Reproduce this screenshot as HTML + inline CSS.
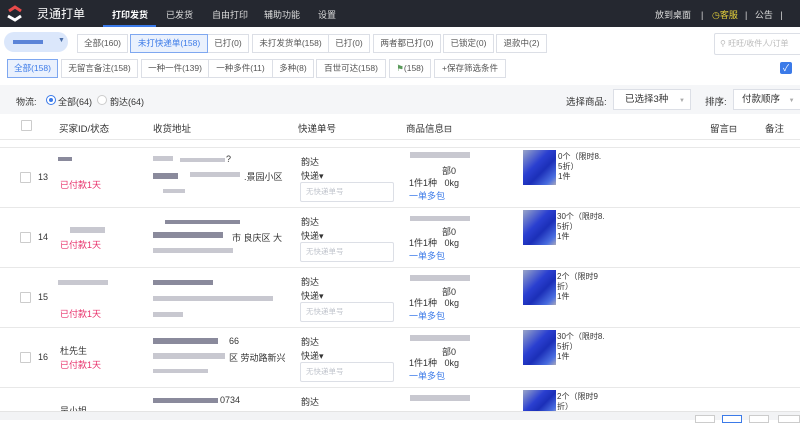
<!DOCTYPE html>
<html><head><meta charset="utf-8"><style>
*{margin:0;padding:0;box-sizing:border-box}
body{width:800px;height:420px;overflow:hidden;background:#fff;font-family:"Liberation Sans","Noto Sans CJK SC",sans-serif;font-size:9px;color:#333;position:relative}
.a{position:absolute;white-space:nowrap}
.hd{left:0;top:0;width:800px;height:27px;background:#252830}
.nav{color:#dcdcdc;font-size:9px;top:8px}
.btn{position:absolute;height:19px;border:1px solid #dcdfe6;background:#fff;font-size:8.5px;line-height:17px;text-align:center;color:#555}
.on{border-color:#7ea7f0;background:#eaf1fd;color:#3b7ae8;z-index:2}
.bl{background:#c8c8d0}
.bd{background:#8a8a9c}
.cb{position:absolute;width:11px;height:11px;border:1px solid #ccc;background:#fff;border-radius:1px}
.red{color:#e8336c;font-size:9px}
.blue{color:#3b7ae8;font-size:9px}
.inp{position:absolute;width:94px;height:20px;border:1px solid #dcdfe6;border-radius:2px;color:#c0c4cc;font-size:7.5px;line-height:18px;padding-left:5px}
.line{position:absolute;left:0;width:800px;height:1px;background:#e8e8e8}
.img{position:absolute;width:33px;height:35px;background:linear-gradient(135deg,#9aa6c8 0%,#2a3fd0 40%,#1b2fb8 60%,#4a6ee0 85%,#aab 100%)}
</style></head><body>
<div class="a hd"></div>
<svg class="a" style="left:6px;top:5px" width="18" height="18" viewBox="0 0 18 18"><path d="M3 6 L9 2 L15 6" stroke="#e84a4a" stroke-width="3" fill="none"/><path d="M2 11 L9 15 L15 11" stroke="#fff" stroke-width="3" fill="none"/></svg>
<div class="a" style="left:37px;top:5px;color:#fff;font-size:12px">灵通打单</div>
<div class="a nav" style="left:112px;color:#fff;font-weight:bold">打印发货</div>
<div class="a" style="left:103px;top:25px;width:53px;height:2px;background:#3b7ae8"></div>
<div class="a nav" style="left:166px">已发货</div>
<div class="a nav" style="left:212px">自由打印</div>
<div class="a nav" style="left:264px">辅助功能</div>
<div class="a nav" style="left:318px">设置</div>
<div class="a nav" style="left:655px">放到桌面 &nbsp; &nbsp;|</div>
<div class="a nav" style="left:712px;color:#e6d23a">◷客服</div>
<div class="a nav" style="left:745px">| &nbsp; 公告 &nbsp; |</div>

<div class="a" style="left:4px;top:32px;width:64px;height:20px;border-radius:10px;background:#dbe7fb"></div>
<div class="a" style="left:13px;top:40px;width:30px;height:4px;background:#5b84d8"></div>
<div class="a" style="left:58px;top:37px;font-size:7px;color:#4a6ea8">▼</div>
<div class="btn" style="left:77px;top:34px;width:51px">全部(160)</div>
<div class="btn on" style="left:130px;top:34px;width:78px">未打快递单(158)</div>
<div class="btn" style="left:207px;top:34px;width:42px">已打(0)</div>
<div class="btn" style="left:252px;top:34px;width:77px">未打发货单(158)</div>
<div class="btn" style="left:328px;top:34px;width:42px">已打(0)</div>
<div class="btn" style="left:373px;top:34px;width:68px">两者都已打(0)</div>
<div class="btn" style="left:443px;top:34px;width:51px">已锁定(0)</div>
<div class="btn" style="left:496px;top:34px;width:51px">退款中(2)</div>
<div class="a" style="left:714px;top:33px;width:90px;height:22px;border:1px solid #dcdfe6;border-radius:2px;color:#bbb;font-size:8px;line-height:20px;padding-left:5px">⚲ 旺旺/收件人/订单</div>

<div class="btn on" style="left:7px;top:59px;width:51px">全部(158)</div>
<div class="btn" style="left:61px;top:59px;width:77px">无留言备注(158)</div>
<div class="btn" style="left:141px;top:59px;width:68px">一种一件(139)</div>
<div class="btn" style="left:208px;top:59px;width:65px">一种多件(11)</div>
<div class="btn" style="left:272px;top:59px;width:42px">多种(8)</div>
<div class="btn" style="left:316px;top:59px;width:70px">百世可达(158)</div>
<div class="btn" style="left:389px;top:59px;width:42px"><span style="color:#5a9a5a">⚑</span>(158)</div>
<div class="btn" style="left:434px;top:59px;width:72px">+保存筛选条件</div>
<div class="a" style="left:780px;top:62px;width:12px;height:12px;background:#3b7ae8;border-radius:2px;color:#fff;font-size:9px;line-height:12px;text-align:center">✓</div>

<div class="a" style="left:0;top:85px;width:800px;height:29px;background:#f5f6f8"></div>
<div class="a" style="left:16px;top:95px">物流:</div>
<div class="a" style="left:46px;top:95px;width:10px;height:10px;border:1px solid #3b7ae8;border-radius:50%;background:#fff"></div>
<div class="a" style="left:49px;top:98px;width:4px;height:4px;border-radius:50%;background:#3b7ae8"></div>
<div class="a" style="left:58px;top:95px">全部(64)</div>
<div class="a" style="left:97px;top:95px;width:10px;height:10px;border:1px solid #ccc;border-radius:50%;background:#fff"></div>
<div class="a" style="left:110px;top:95px">韵达(64)</div>
<div class="a" style="left:566px;top:94px;font-size:9.5px">选择商品:</div>
<div class="a" style="left:613px;top:89px;width:78px;height:21px;border:1px solid #dcdfe6;background:#fff;font-size:9.5px;line-height:19px;padding-left:11px">已选择3种 <span style="color:#aaa;font-size:6px;margin-left:8px">▼</span></div>
<div class="a" style="left:705px;top:94px;font-size:9.5px">排序:</div>
<div class="a" style="left:733px;top:89px;width:70px;height:21px;border:1px solid #dcdfe6;background:#fff;font-size:9.5px;line-height:19px;padding-left:8px">付款顺序 <span style="color:#aaa;font-size:6px;margin-left:6px">▼</span></div>

<div class="cb" style="left:21px;top:120px"></div>
<div class="a" style="left:59px;top:121px;font-size:9.5px">买家ID/状态</div>
<div class="a" style="left:153px;top:121px;font-size:9.5px">收货地址</div>
<div class="a" style="left:298px;top:121px;font-size:9.5px">快递单号</div>
<div class="a" style="left:406px;top:121px;font-size:9.5px">商品信息⊟</div>
<div class="a" style="left:710px;top:121px;font-size:9.5px">留言⊟</div>
<div class="a" style="left:765px;top:121px;font-size:9.5px">备注</div>
<div class="line" style="top:139px"></div>
<div class="line" style="top:147px"></div>

<!-- row 13 -->
<div class="cb" style="left:20px;top:172px"></div>
<div class="a" style="left:38px;top:172px">13</div>
<div class="a bd" style="left:60px;top:170px;display:none"></div>
<div class="a bd" style="left:58px;top:157px;width:14px;height:4px"></div>
<div class="a red" style="left:60px;top:178px">已付款1天</div>
<div class="a bl" style="left:153px;top:156px;width:20px;height:5px"></div><div class="a bl" style="left:180px;top:158px;width:45px;height:4px"></div><div class="a" style="left:226px;top:154px">?</div>
<div class="a bd" style="left:153px;top:173px;width:25px;height:6px"></div><div class="a bl" style="left:190px;top:172px;width:50px;height:5px"></div><div class="a" style="left:244px;top:170px">.景园小区</div>
<div class="a bl" style="left:163px;top:189px;width:22px;height:4px"></div>
<div class="a" style="left:301px;top:155px">韵达</div><div class="a" style="left:301px;top:169px">快递▾</div>
<div class="inp" style="left:300px;top:182px">无快递单号</div>
<div class="a bl" style="left:410px;top:152px;width:60px;height:6px"></div>
<div class="a" style="left:442px;top:164px">部0</div>
<div class="a" style="left:409px;top:176px">1件1种 &nbsp; 0kg</div>
<div class="a blue" style="left:409px;top:189px">一单多包</div>
<div class="img" style="left:523px;top:150px"></div>
<div class="a" style="left:558px;top:152px;font-size:8px;line-height:10px">0个（限时8.<br>5折）<br>1件</div>
<div class="line" style="top:207px"></div>

<!-- row 14 -->
<div class="cb" style="left:20px;top:232px"></div>
<div class="a" style="left:38px;top:232px">14</div>
<div class="a bl" style="left:70px;top:227px;width:35px;height:6px"></div>
<div class="a red" style="left:60px;top:238px">已付款1天</div>
<div class="a bd" style="left:165px;top:220px;width:75px;height:4px"></div>
<div class="a bd" style="left:153px;top:232px;width:70px;height:6px"></div><div class="a" style="left:232px;top:231px">市 良庆区 大</div>
<div class="a bl" style="left:153px;top:248px;width:80px;height:5px"></div>
<div class="a" style="left:301px;top:215px">韵达</div><div class="a" style="left:301px;top:229px">快递▾</div>
<div class="inp" style="left:300px;top:242px">无快递单号</div>
<div class="a bl" style="left:410px;top:216px;width:60px;height:5px"></div>
<div class="a" style="left:442px;top:225px">部0</div>
<div class="a" style="left:409px;top:236px">1件1种 &nbsp; 0kg</div>
<div class="a blue" style="left:409px;top:249px">一单多包</div>
<div class="img" style="left:523px;top:210px"></div>
<div class="a" style="left:557px;top:212px;font-size:8px;line-height:10px">30个（限时8.<br>5折）<br>1件</div>
<div class="line" style="top:267px"></div>

<!-- row 15 -->
<div class="cb" style="left:20px;top:292px"></div>
<div class="a" style="left:38px;top:292px">15</div>
<div class="a bl" style="left:58px;top:280px;width:50px;height:5px"></div>
<div class="a red" style="left:60px;top:307px">已付款1天</div>
<div class="a bd" style="left:153px;top:280px;width:60px;height:5px"></div>
<div class="a bl" style="left:153px;top:296px;width:120px;height:5px"></div>
<div class="a bl" style="left:153px;top:312px;width:30px;height:5px"></div>
<div class="a" style="left:301px;top:275px">韵达</div><div class="a" style="left:301px;top:289px">快递▾</div>
<div class="inp" style="left:300px;top:302px">无快递单号</div>
<div class="a bl" style="left:410px;top:275px;width:60px;height:6px"></div>
<div class="a" style="left:442px;top:285px">部0</div>
<div class="a" style="left:409px;top:296px">1件1种 &nbsp; 0kg</div>
<div class="a blue" style="left:409px;top:309px">一单多包</div>
<div class="img" style="left:523px;top:270px"></div>
<div class="a" style="left:557px;top:272px;font-size:8px;line-height:10px">2个（限时9<br>折）<br>1件</div>
<div class="line" style="top:327px"></div>

<!-- row 16 -->
<div class="cb" style="left:20px;top:352px"></div>
<div class="a" style="left:38px;top:352px">16</div>
<div class="a" style="left:60px;top:344px">杜先生</div>
<div class="a red" style="left:60px;top:358px">已付款1天</div>
<div class="a bd" style="left:153px;top:338px;width:65px;height:6px"></div><div class="a" style="left:229px;top:336px">66</div>
<div class="a bl" style="left:153px;top:353px;width:72px;height:6px"></div><div class="a" style="left:229px;top:351px">区 劳动路新兴</div>
<div class="a bl" style="left:153px;top:369px;width:55px;height:4px"></div>
<div class="a" style="left:301px;top:335px">韵达</div><div class="a" style="left:301px;top:349px">快递▾</div>
<div class="inp" style="left:300px;top:362px">无快递单号</div>
<div class="a bl" style="left:410px;top:335px;width:60px;height:6px"></div>
<div class="a" style="left:442px;top:345px">部0</div>
<div class="a" style="left:409px;top:356px">1件1种 &nbsp; 0kg</div>
<div class="a blue" style="left:409px;top:369px">一单多包</div>
<div class="img" style="left:523px;top:330px"></div>
<div class="a" style="left:557px;top:332px;font-size:8px;line-height:10px">30个（限时8.<br>5折）<br>1件</div>
<div class="line" style="top:387px"></div>

<!-- row 17 partial -->
<div class="a" style="left:60px;top:404px">吴小姐</div>
<div class="a bd" style="left:153px;top:398px;width:65px;height:5px"></div><div class="a" style="left:220px;top:395px">0734</div>
<div class="a" style="left:301px;top:395px">韵达</div>
<div class="a bl" style="left:410px;top:395px;width:60px;height:6px"></div>
<div class="img" style="left:523px;top:390px;height:25px"></div>
<div class="a" style="left:557px;top:392px;font-size:8px;line-height:10px">2个（限时9<br>折）</div>

<div class="a" style="left:0;top:411px;width:800px;height:9px;background:#f2f3f5;border-top:1px solid #e4e4e4"></div>
<div class="a" style="left:695px;top:415px;width:20px;height:8px;border:1px solid #ccc;background:#fff"></div>
<div class="a" style="left:722px;top:415px;width:20px;height:8px;border:1px solid #3b7ae8;background:#fff"></div>
<div class="a" style="left:749px;top:415px;width:20px;height:8px;border:1px solid #ccc;background:#fff"></div>
<div class="a" style="left:778px;top:415px;width:22px;height:8px;border:1px solid #ccc;background:#fff"></div>
</body></html>
